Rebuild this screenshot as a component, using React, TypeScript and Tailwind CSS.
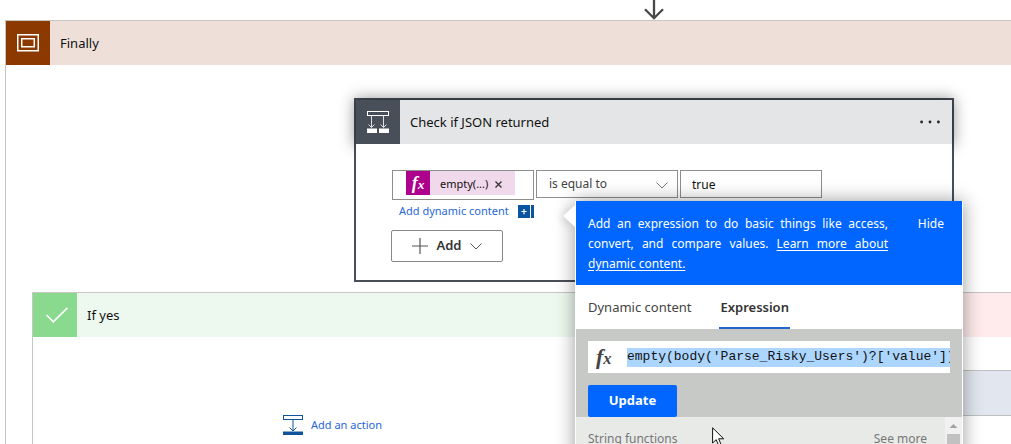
import type { ReactNode } from "react";

function ScopeIcon() {
  return (
    <svg width="22" height="18" viewBox="0 0 22 18" fill="none" stroke="#fff" aria-hidden="true">
      <rect x="0.75" y="0.75" width="20.5" height="16" strokeWidth="1.5" />
      <rect x="4.75" y="4.75" width="12.5" height="8" strokeWidth="1.5" />
    </svg>
  );
}

function ConditionIcon() {
  return (
    <svg width="22" height="22" viewBox="0 0 22 22" fill="none" stroke="#fff" aria-hidden="true">
      <rect x="0.5" y="0.5" width="21" height="4" />
      <path d="M4.5 5V16M1.5 13.5L4.5 16.5L7.5 13.5M16.5 5V16M13.5 13.5L16.5 16.5L19.5 13.5" stroke="#dfe2e5" />
      <path d="M0 17.5H10V22H0ZM12 17.5H22V22H12Z" fill="#fff" stroke="none" />
    </svg>
  );
}

function CheckIcon() {
  return (
    <svg className="translate-x-0.5" width="22" height="16" viewBox="0 0 22 16" fill="none" stroke="#fff" strokeWidth="1.7" aria-hidden="true">
      <path d="M0.6 8L7.3 14.8L21.4 0.8" />
    </svg>
  );
}

function Chevron({ className = "" }: { className?: string }) {
  return (
    <svg className={className} width="12" height="7" viewBox="0 0 12 7" fill="none" stroke="currentColor" aria-hidden="true">
      <path d="M0.5 0.5L6 6L11.5 0.5" />
    </svg>
  );
}

function InsertIcon() {
  return (
    <svg width="20" height="20" viewBox="0 0 20 20" fill="none" stroke="#0f549c" aria-hidden="true">
      <rect x="0.5" y="0.5" width="19" height="4" />
      <path d="M10 5V15.5M6.5 12.5L10 16L13.5 12.5" />
      <path d="M0 16.5H20V20H0Z" fill="#0f549c" stroke="none" />
    </svg>
  );
}

function FxMark({ className }: { className: string }) {
  return (
    <span className={"font-['Liberation_Serif',serif] font-bold italic " + className} aria-hidden="true">
      <span>f</span>
      <sub className="bottom-0 text-[75%]">x</sub>
    </span>
  );
}

function Header({ icon, iconClass, className, children }: { icon: ReactNode; iconClass: string; className: string; children: ReactNode }) {
  return (
    <div className={"flex h-11 items-center " + className}>
      <span className={"grid size-11 shrink-0 place-items-center " + iconClass}>{icon}</span>
      <div className="flex flex-1 items-center justify-between pl-2.5 pr-3">{children}</div>
    </div>
  );
}

function ConditionCard() {
  return (
    <section className="w-[600px] border-2 border-[#484f58]">
      <Header icon={<ConditionIcon />} iconClass="bg-[#484f58]" className="bg-[#e3e5e6] shadow-[0_0_14px_2px_rgba(0,0,0,0.4)]">
        <h2 className="pt-0.5 text-[13px]">Check if JSON returned</h2>
        <button type="button" aria-label="Menu" className="flex h-6 items-center px-0">
          <svg width="20" height="4" viewBox="0 0 20 4" fill="#222" aria-hidden="true">
            <circle cx="1.6" cy="2" r="1.4" />
            <circle cx="10" cy="2" r="1.4" />
            <circle cx="18.4" cy="2" r="1.4" />
          </svg>
        </button>
      </Header>
      <div className="bg-white pb-[18px] pl-[35px] pr-9 pt-[26px]">
        <div className="flex items-start gap-0.5 pl-px text-xs">
          <div className="flex h-[30px] w-[142px] items-start border border-[#8f8d8b] pl-[13px]">
            <span className="flex h-6 w-[109px] items-center bg-[#f1d9ec]">
              <span className="grid size-6 place-items-center bg-[#ad008c] text-white">
                <FxMark className="text-lg leading-6" />
              </span>
              <span className="pl-2.5 pt-0.5 text-[11px]">empty(...)</span>
              <button type="button" aria-label="Remove empty(...)" className="grid h-6 w-5 place-items-center pt-0.5">
                <svg width="7" height="7" viewBox="0 0 7 7" stroke="#333" strokeWidth="1.3" aria-hidden="true">
                  <path d="M0.5 0.5L6.5 6.5M6.5 0.5L0.5 6.5" />
                </svg>
              </button>
            </span>
          </div>
          <div className="relative w-[142px]">
            <select aria-label="Operator" defaultValue="is equal to" className="h-7 w-full appearance-none border border-[#8f8d8b] bg-white pl-3 text-[#444]">
              <option>is equal to</option>
              <option>is not equal to</option>
            </select>
            <Chevron className="pointer-events-none absolute right-2.5 top-3 text-[#777]" />
          </div>
          <input aria-label="Value" defaultValue="true" className="h-7 w-[142px] border border-[#8f8d8b] px-[11px]" />
        </div>
        <a href="#dynamic" className="flex w-[143px] items-center justify-between pl-2 text-[11px] leading-[22px] text-[#2966d8]">
          Add dynamic content
          <svg width="16" height="13" viewBox="0 0 16 13" aria-hidden="true">
            <path d="M0 0H12V13H0ZM13 0H16V13H13Z" fill="#0b54a0" />
            <path d="M6 4V9.2M3.4 6.5H8.6" stroke="#fff" strokeWidth="1.2" />
          </svg>
        </a>
        <button type="button" className="mt-2 flex h-8 w-28 items-center justify-center gap-2 rounded-xs border border-[#8a8886] text-[13px] font-semibold text-[#333]">
          <svg width="16" height="16" viewBox="0 0 16 16" stroke="#555" aria-hidden="true">
            <path d="M8 0V16M0 8H16" strokeWidth="1.2" />
          </svg>
          Add
          <Chevron className="text-[#555]" />
        </button>
      </div>
    </section>
  );
}

function ExpressionPopup() {
  return (
    <aside className="absolute left-[575px] top-[201px] w-[388px] shadow-[0_0_18px_rgba(0,0,0,0.4)]">
      <svg className="absolute -left-3 top-1 drop-shadow-[-3px_1px_4px_rgba(0,0,0,0.15)]" width="12" height="22" viewBox="0 0 12 22" aria-hidden="true">
        <path d="M12 0V22L0 11Z" fill="#fff" />
      </svg>
      <div className="relative border-l border-r border-white">
        <div className="flex h-[84px] items-start justify-between bg-[#0066ff] pl-3 pr-[18px] pt-[13px] text-xs leading-5 text-white">
          <p className="w-[300px] text-justify">
            Add an expression to do basic things like access, convert, and compare values.{" "}
            <a href="#learn" className="underline underline-offset-2">Learn more about dynamic content.</a>
          </p>
          <button type="button">Hide</button>
        </div>
        <div role="tablist" className="flex h-11 items-stretch gap-7 bg-white pl-3 text-[13px] text-[#444]">
          <button type="button" role="tab" aria-selected="false" className="pt-0.5">Dynamic content</button>
          <button type="button" role="tab" aria-selected="true" className="border-b-2 border-[#2266cc] px-px pt-1 font-semibold text-[#333]">Expression</button>
        </div>
        <div className="bg-[#c7c9c7] pl-3 pr-3 pt-3">
          <label className="flex h-8 items-center overflow-hidden bg-white pl-2">
            <FxMark className="w-[31px] shrink-0 text-[22px] leading-7 text-[#444]" />
            <input
              aria-label="Expression"
              defaultValue="empty(body('Parse_Risky_Users')?['value'])"
              className="h-[19px] min-w-0 flex-1 bg-[#add6ff] font-['Liberation_Mono',monospace] text-[13px] outline-none"
            />
          </label>
          <button type="button" className="mt-3 block h-8 w-[89px] rounded-xs bg-[#0066ff] text-[13px] font-bold text-white">Update</button>
        </div>
        <div className="flex h-[100px] bg-[#e8eae7]">
          <div className="flex flex-1 justify-between pl-3 pr-[18px] pt-3 text-xs leading-5 text-[#777]">
            <h3>String functions</h3>
            <a href="#more">See more</a>
          </div>
          <div className="flex w-[17px] flex-col items-center bg-[#f1f1f1]" aria-hidden="true">
            <svg width="17" height="17" viewBox="0 0 17 17" fill="#a3a3a3">
              <path d="M4.5 11H12.5L8.5 7Z" />
            </svg>
            <span className="w-[13px] flex-1 bg-[#c1c1c1]" />
          </div>
        </div>
      </div>
    </aside>
  );
}

export default function App() {
  return (
    <main className="relative h-screen overflow-hidden bg-white font-['Noto_Sans',sans-serif] text-[#111]">
      <div className="flex h-5 pl-[644px]">
        <svg width="20" height="20" viewBox="0 0 20 20" fill="none" stroke="#484848" strokeWidth="2.3" aria-hidden="true">
          <path d="M10 0V18M1 9.2L10 18.2L19 9.2" />
        </svg>
      </div>
      <section className="ml-[5px] h-full border-l border-t border-[#c8c6c4]">
        <Header icon={<ScopeIcon />} iconClass="bg-[#8c3900]" className="bg-[#eee0d9]">
          <h1 className="pt-0.5 text-[13px]">Finally</h1>
        </Header>
        <div className="pl-[348px] pt-[33px]">
          <ConditionCard />
        </div>
        <div className="mt-2.5 flex items-stretch gap-11 pl-[26px]">
          <section className="h-80 w-[600px] shrink-0 border-l border-t border-[#c8c6c4]">
            <Header icon={<CheckIcon />} iconClass="bg-[#89da8f]" className="bg-[#edf8ef]">
              <h2 className="pt-0.5 text-[13px]">If yes</h2>
            </Header>
            <button type="button" className="mx-auto mt-[78px] flex items-center gap-2 text-[11px] leading-5 text-[#2966d8]">
              <InsertIcon />
              Add an action
            </button>
          </section>
          <section className="h-80 flex-1 border-l border-t border-[#c8c6c4]">
            <div className="h-11 bg-[#ffebeb]" />
            <div className="ml-6 mt-[33px] h-[46px] border-y border-l border-[#c0c0c0] bg-[#e2e7ef]" />
          </section>
        </div>
      </section>
      <ExpressionPopup />
      <svg className="absolute left-[712px] top-[427px]" width="13" height="20" viewBox="0 0 13 20" aria-hidden="true">
        <path d="M0.6 0.8V16L4.2 12.7L6.8 18.8L9.2 17.8L6.6 11.8H11.7Z" fill="#fff" stroke="#111" />
      </svg>
    </main>
  );
}
